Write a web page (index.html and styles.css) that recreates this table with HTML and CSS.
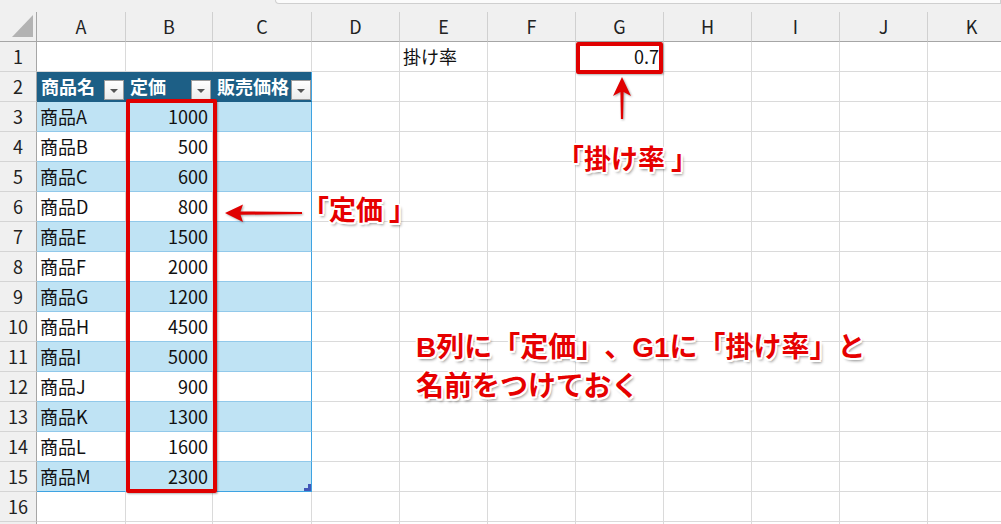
FILE: index.html
```html
<!DOCTYPE html>
<html lang="ja">
<head>
<meta charset="utf-8">
<link rel="stylesheet" href="styles.css">
</head>
<body>
<div class="app">
  <div class="topbar"><div class="fx"></div></div>
  <div class="sheet">
    <div class="row colhdr">
      <div class="corner"><svg width="22" height="23" viewBox="0 0 22 23"><polygon points="21,0 21,22 0,22" fill="#b3b3b3"/></svg></div>
      <div class="ch">A</div><div class="ch">B</div><div class="ch">C</div><div class="ch">D</div><div class="ch">E</div><div class="ch">F</div><div class="ch">G</div><div class="ch">H</div><div class="ch">I</div><div class="ch">J</div><div class="ch">K</div><div class="ch"></div>
    </div>
    <div class="row">
      <div class="rh">1</div><div class="c"></div><div class="c"></div><div class="c"></div><div class="c"></div><div class="c">掛け率</div><div class="c"></div><div class="c num">0.7</div><div class="c"></div><div class="c"></div><div class="c"></div><div class="c"></div><div class="c"></div>
    </div>
    <div class="row">
      <div class="rh">2</div>
      <div class="c th"><span class="tt">商品名</span><span class="dd"><i></i></span></div>
      <div class="c th"><span class="tt">定価</span><span class="dd"><i></i></span></div>
      <div class="c th last"><span class="tt">販売価格</span><span class="dd"><i></i></span></div>
      <div class="c"></div><div class="c"></div><div class="c"></div><div class="c"></div><div class="c"></div><div class="c"></div><div class="c"></div><div class="c"></div><div class="c"></div>
    </div>
    <div class="row band"><div class="rh">3</div><div class="c t">商品A</div><div class="c t num">1000</div><div class="c t last"></div><div class="c"></div><div class="c"></div><div class="c"></div><div class="c"></div><div class="c"></div><div class="c"></div><div class="c"></div><div class="c"></div><div class="c"></div></div>
    <div class="row"><div class="rh">4</div><div class="c t">商品B</div><div class="c t num">500</div><div class="c t last"></div><div class="c"></div><div class="c"></div><div class="c"></div><div class="c"></div><div class="c"></div><div class="c"></div><div class="c"></div><div class="c"></div><div class="c"></div></div>
    <div class="row band"><div class="rh">5</div><div class="c t">商品C</div><div class="c t num">600</div><div class="c t last"></div><div class="c"></div><div class="c"></div><div class="c"></div><div class="c"></div><div class="c"></div><div class="c"></div><div class="c"></div><div class="c"></div><div class="c"></div></div>
    <div class="row"><div class="rh">6</div><div class="c t">商品D</div><div class="c t num">800</div><div class="c t last"></div><div class="c"></div><div class="c"></div><div class="c"></div><div class="c"></div><div class="c"></div><div class="c"></div><div class="c"></div><div class="c"></div><div class="c"></div></div>
    <div class="row band"><div class="rh">7</div><div class="c t">商品E</div><div class="c t num">1500</div><div class="c t last"></div><div class="c"></div><div class="c"></div><div class="c"></div><div class="c"></div><div class="c"></div><div class="c"></div><div class="c"></div><div class="c"></div><div class="c"></div></div>
    <div class="row"><div class="rh">8</div><div class="c t">商品F</div><div class="c t num">2000</div><div class="c t last"></div><div class="c"></div><div class="c"></div><div class="c"></div><div class="c"></div><div class="c"></div><div class="c"></div><div class="c"></div><div class="c"></div><div class="c"></div></div>
    <div class="row band"><div class="rh">9</div><div class="c t">商品G</div><div class="c t num">1200</div><div class="c t last"></div><div class="c"></div><div class="c"></div><div class="c"></div><div class="c"></div><div class="c"></div><div class="c"></div><div class="c"></div><div class="c"></div><div class="c"></div></div>
    <div class="row"><div class="rh">10</div><div class="c t">商品H</div><div class="c t num">4500</div><div class="c t last"></div><div class="c"></div><div class="c"></div><div class="c"></div><div class="c"></div><div class="c"></div><div class="c"></div><div class="c"></div><div class="c"></div><div class="c"></div></div>
    <div class="row band"><div class="rh">11</div><div class="c t">商品I</div><div class="c t num">5000</div><div class="c t last"></div><div class="c"></div><div class="c"></div><div class="c"></div><div class="c"></div><div class="c"></div><div class="c"></div><div class="c"></div><div class="c"></div><div class="c"></div></div>
    <div class="row"><div class="rh">12</div><div class="c t">商品J</div><div class="c t num">900</div><div class="c t last"></div><div class="c"></div><div class="c"></div><div class="c"></div><div class="c"></div><div class="c"></div><div class="c"></div><div class="c"></div><div class="c"></div><div class="c"></div></div>
    <div class="row band"><div class="rh">13</div><div class="c t">商品K</div><div class="c t num">1300</div><div class="c t last"></div><div class="c"></div><div class="c"></div><div class="c"></div><div class="c"></div><div class="c"></div><div class="c"></div><div class="c"></div><div class="c"></div><div class="c"></div></div>
    <div class="row"><div class="rh">14</div><div class="c t">商品L</div><div class="c t num">1600</div><div class="c t last"></div><div class="c"></div><div class="c"></div><div class="c"></div><div class="c"></div><div class="c"></div><div class="c"></div><div class="c"></div><div class="c"></div><div class="c"></div></div>
    <div class="row band end"><div class="rh">15</div><div class="c t">商品M</div><div class="c t num">2300</div><div class="c t last corner-h"><svg class="handle" width="7" height="7" viewBox="0 0 7 7"><polygon points="4,0 7,0 7,7 0,7 0,4 4,4" fill="#4257b8"/></svg></div><div class="c"></div><div class="c"></div><div class="c"></div><div class="c"></div><div class="c"></div><div class="c"></div><div class="c"></div><div class="c"></div><div class="c"></div></div>
    <div class="row"><div class="rh">16</div><div class="c"></div><div class="c"></div><div class="c"></div><div class="c"></div><div class="c"></div><div class="c"></div><div class="c"></div><div class="c"></div><div class="c"></div><div class="c"></div><div class="c"></div><div class="c"></div></div>
    <div class="row"><div class="rh"></div><div class="c"></div><div class="c"></div><div class="c"></div><div class="c"></div><div class="c"></div><div class="c"></div><div class="c"></div><div class="c"></div><div class="c"></div><div class="c"></div><div class="c"></div><div class="c"></div></div>
  </div>

  <div class="box box-b"></div>
  <div class="box box-g"></div>
  <svg class="arrows" width="1001" height="524" viewBox="0 0 1001 524">
    <polygon points="622,77 631,96 623.6,92 623.1,119 620.9,119 620.4,92 613,96" fill="#e00000"/>
    <polygon points="225,213 243,204.5 240.5,211.4 302,212.1 302,214.1 240.5,214.8 243,222" fill="#e00000"/>
  </svg>
  <div class="note note-price">「定価<span class="cb">」</span></div>
  <div class="note note-rate">「掛け率<span class="cb">」</span></div>
  <div class="note note-main"><span class="lat">B</span>列に「定価」、<span class="lat">G1</span>に「掛け率」と<br>名前をつけておく</div>
</div>
</body>
</html>
```

FILE: styles.css
```css
html, body {
  margin: 0;
  padding: 0;
  background: #ffffff;
}

.app {
  position: relative;
  width: 1001px;
  height: 524px;
  overflow: hidden;
  background: #f0f0f0;
  font-family: "Noto Sans CJK JP", "Noto Sans", sans-serif;
  font-size: 18px;
  color: #111;
}

.topbar {
  height: 12px;
  background: #f0f0f0;
  display: flex;
  justify-content: flex-end;
  align-items: flex-start;
}

.fx {
  width: 724px;
  height: 3px;
  background: #fbfbfb;
  border: 1px solid #cfcfcf;
  border-top: none;
  border-bottom-left-radius: 4px;
}

.sheet {
  display: flex;
  flex-direction: column;
  background: #ffffff;
}

.row {
  display: grid;
  grid-template-columns: 37px 89px 87px 99px 88px 88px 88px 88px 88px 88px 88px 88px;
  height: 30px;
}

.row > div {
  box-sizing: border-box;
  height: 30px;
  border-right: 1px solid #dadada;
  border-bottom: 1px solid #dadada;
  display: flex;
  align-items: center;
  white-space: nowrap;
  overflow: hidden;
  line-height: 1;
}

.colhdr > div {
  background: #f0f0f0;
  border-right: 1px solid #d0d0d0;
  border-bottom: 1px solid #a6a6a6;
  justify-content: center;
  color: #222;
  padding-bottom: 1px;
}

.colhdr .corner {
  border-right: 1px solid #a6a6a6;
  justify-content: flex-start;
  align-items: flex-end;
  padding: 0 0 3px 12px;
}

.corner svg {
  display: block;
}

.rh {
  background: #f0f0f0;
  justify-content: center;
  color: #222;
  padding-bottom: 2px;
  border-right: 1px solid #a6a6a6 !important;
  border-bottom: 1px solid #d4d4d4 !important;
}

.c {
  padding: 0 4px 2px 3px;
}

.c.num {
  justify-content: flex-end;
}

/* table header */
.c.th {
  background: #1d5f86;
  color: #ffffff;
  font-weight: 700;
  justify-content: space-between;
  align-items: stretch;
  padding: 0 1px 0 4px;
  border-right-color: #1d5f86;
  border-bottom-color: #1d5f86;
}

.c.th .tt {
  display: flex;
  align-items: center;
  overflow: hidden;
  flex: 1 1 auto;
  min-width: 0;
  padding-bottom: 2px;
}

.dd {
  flex: 0 0 auto;
  align-self: flex-end;
  margin-bottom: 1px;
  width: 20px;
  height: 20px;
  box-sizing: border-box;
  border: 1px solid #9c9c9c;
  background: linear-gradient(#ffffff, #ececec);
  display: flex;
  align-items: center;
  justify-content: center;
  padding-top: 2px;
}

.dd i {
  width: 0;
  height: 0;
  border-left: 4px solid transparent;
  border-right: 4px solid transparent;
  border-top: 4px solid #555555;
}

/* table body */
.c.t {
  border-right-color: #dadada;
  border-bottom-color: #92c9ea;
}

.band .c.t {
  background: #bfe3f4;
  border-right-color: #bfe3f4;
}

.c.last,
.band .c.last {
  border-right: 1px solid #3ea3e2;
}

.c.th.last {
  border-right: 1px solid #3ea3e2;
  padding-right: 0;
}

.end .c.t {
  border-bottom: 1px solid #3ea3e2;
}

.corner-h {
  justify-content: flex-end;
  align-items: flex-end !important;
  padding: 0 !important;
}

.handle {
  display: block;
}

/* annotations */
.box {
  position: absolute;
  box-sizing: border-box;
  border: 4px solid #e00000;
  border-radius: 2px;
  box-shadow: 1px 1px 2px rgba(0, 0, 0, 0.3);
}

.box-b {
  left: 126px;
  top: 99px;
  width: 91px;
  height: 394px;
}

.box-g {
  left: 576px;
  top: 42px;
  width: 87px;
  height: 32px;
}

.arrows {
  position: absolute;
  left: 0;
  top: 0;
  filter: drop-shadow(1px 1px 1px rgba(0, 0, 0, 0.35));
}

.note {
  position: absolute;
  color: #e60000;
  font-weight: 700;
  font-size: 27px;
  line-height: 37px;
  white-space: nowrap;
  text-spacing-trim: space-all;
  text-shadow:
    -2px 0 #fff, 2px 0 #fff, 0 -2px #fff, 0 2px #fff,
    -1.5px -1.5px #fff, 1.5px -1.5px #fff, -1.5px 1.5px #fff, 1.5px 1.5px #fff,
    2px 3px 3px rgba(0, 0, 0, 0.45);
}

.note .cb {
  padding-left: 6px;
}

.note-price {
  left: 302px;
  top: 190px;
}

.note-rate {
  left: 557px;
  top: 139px;
}

.note-main {
  left: 416px;
  top: 327px;
  font-size: 28px;
}

.lat {
  font-family: "Liberation Sans", "Noto Sans", sans-serif;
  font-weight: 700;
}
```
